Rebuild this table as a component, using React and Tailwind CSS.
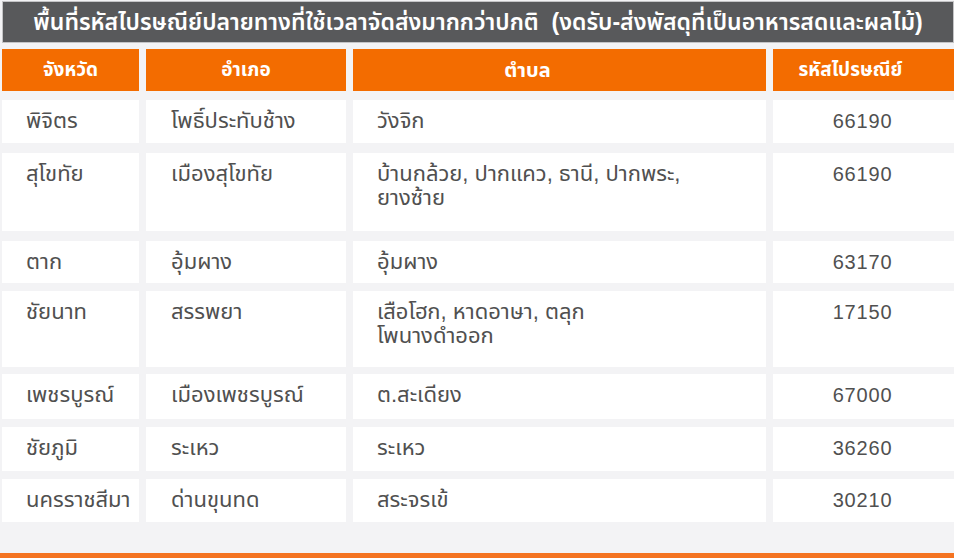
import React from "react";

const rows = [
  { province: "พิจิตร", district: "โพธิ์ประทับช้าง", sub: ["วังจิก"], code: "66190", box: "h-[43px] mt-[9px]" },
  { province: "สุโขทัย", district: "เมืองสุโขทัย", sub: ["บ้านกล้วย, ปากแคว, ธานี, ปากพระ,", "ยางซ้าย"], code: "66190", box: "h-[78px] mt-[10px]" },
  { province: "ตาก", district: "อุ้มผาง", sub: ["อุ้มผาง"], code: "63170", box: "h-[42px] mt-[10px]" },
  { province: "ชัยนาท", district: "สรรพยา", sub: ["เสือโฮก, หาดอาษา, ตลุก", "โพนางดำออก"], code: "17150", box: "h-[76px] mt-[8px]" },
  { province: "เพชรบูรณ์", district: "เมืองเพชรบูรณ์", sub: ["ต.สะเดียง"], code: "67000", box: "h-[45px] mt-[7px]" },
  { province: "ชัยภูมิ", district: "ระเหว", sub: ["ระเหว"], code: "36260", box: "h-[44px] mt-[8px]" },
  { province: "นครราชสีมา", district: "ด่านขุนทด", sub: ["สระจรเข้"], code: "30210", box: "h-[43px] mt-[8px]" },
];

const font = { fontFamily: '"Liberation Sans", "Noto Sans Thai", "Noto Sans Thai UI", Loma, Garuda, sans-serif' };

export default function App() {
  return (
    <div className="w-[954px] h-[558px] bg-[#f3f3f5] flex flex-col overflow-hidden" style={font}>
      <div className="mt-[1px] ml-[2px] h-[42px] bg-[#58595b] border border-[#c4c4c6] flex items-center justify-center text-white text-[23px] font-semibold whitespace-nowrap">
        พื้นที่รหัสไปรษณีย์ปลายทางที่ใช้เวลาจัดส่งมากกว่าปกติ&nbsp; (งดรับ-ส่งพัสดุที่เป็นอาหารสดและผลไม้)
      </div>

      <div className="mt-[6px] ml-[2px] h-[42px] grid grid-cols-[137px_200px_413px_1fr] gap-x-[7px] text-white text-[19px] font-bold">
        <div className="bg-[#f36c00] flex items-center justify-center">จังหวัด</div>
        <div className="bg-[#f36c00] flex items-center justify-center">อำเภอ</div>
        <div className="bg-[#f36c00] flex items-center justify-center pr-[64px] text-[20px]">ตำบล</div>
        <div className="bg-[#f36c00] flex items-center justify-center pr-[26px]">รหัสไปรษณีย์</div>
      </div>

      {rows.map((r, i) => (
        <div key={i} className={`ml-[2px] grid grid-cols-[137px_200px_413px_1fr] gap-x-[7px] text-[#505050] text-[22px] leading-[24px] ${r.box}`}>
          <div className="bg-white pl-[24px] pt-[9px] whitespace-nowrap">{r.province}</div>
          <div className="bg-white pl-[25px] pt-[9px] whitespace-nowrap">{r.district}</div>
          <div className="bg-white pl-[24px] pt-[9px] whitespace-nowrap">
            {r.sub.map((s, j) => (
              <div key={j}>{s}</div>
            ))}
          </div>
          <div className="bg-white pt-[9px] pr-[2px] text-center text-[20px] tracking-[0.04em]">{r.code}</div>
        </div>
      ))}

      <div className="flex-1" />
      <div className="h-[5px] bg-[#f47321]" />
    </div>
  );
}
